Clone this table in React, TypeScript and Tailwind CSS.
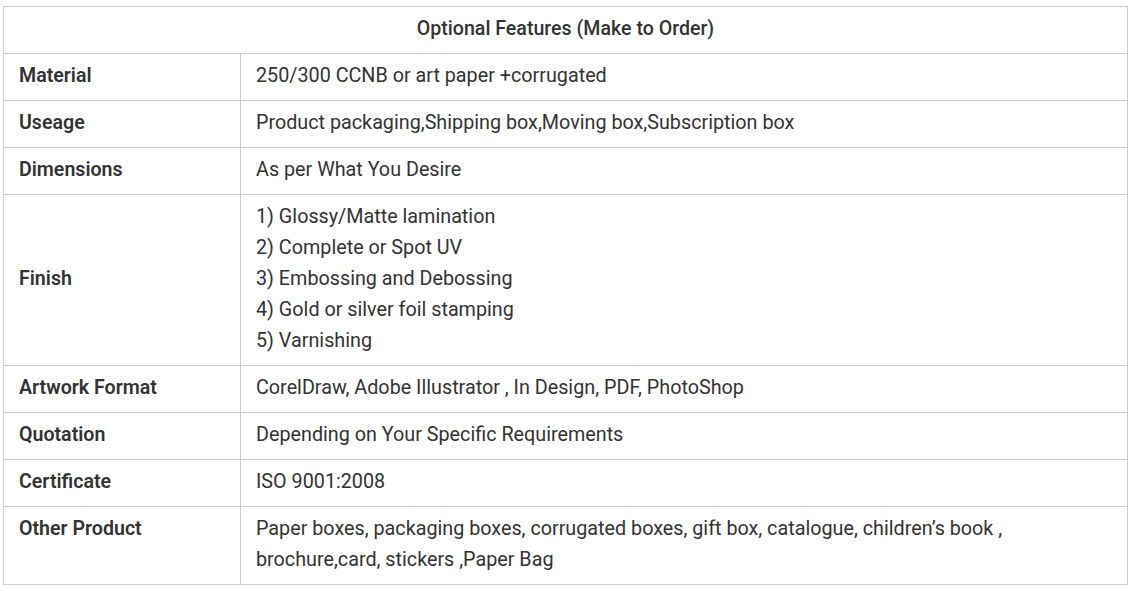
import React from "react";

const rows: { label: string; value: React.ReactNode; top?: boolean }[] = [
  { label: "Material", value: "250/300 CCNB or art paper +corrugated" },
  { label: "Useage", value: "Product packaging,Shipping box,Moving box,Subscription box" },
  { label: "Dimensions", value: "As per What You Desire" },
  {
    label: "Finish",
    value: (
      <>
        1) Glossy/Matte lamination
        <br />
        2) Complete or Spot UV
        <br />
        3) Embossing and Debossing
        <br />
        4) Gold or silver foil stamping
        <br />
        5) Varnishing
      </>
    ),
  },
  { label: "Artwork Format", value: "CorelDraw, Adobe Illustrator , In Design, PDF, PhotoShop" },
  { label: "Quotation", value: "Depending on Your Specific Requirements" },
  { label: "Certificate", value: "ISO 9001:2008" },
  {
    label: "Other Product",
    top: true,
    value: (
      <>
        Paper boxes, packaging boxes, corrugated boxes, gift box, catalogue, children’s book ,
        <br />
        brochure,card, stickers ,Paper Bag
      </>
    ),
  },
];

export default function App() {
  return (
    <div className="bg-white w-[1132px] h-[589px] pl-[3px] pt-[6px]" style={{ fontFamily: "Roboto, 'Liberation Sans', sans-serif" }}>
      <table className="w-[1125px] border-collapse text-[19.6px] text-[#333333] leading-[31px]">
        <tbody>
          <tr>
            <td colSpan={2} className="border border-[#cccccc] pt-[6px] pb-[9px] px-4 text-center font-medium">
              Optional Features (Make to Order)
            </td>
          </tr>
          {rows.map((r) => (
            <tr key={r.label}>
              <td className={`border border-[#cccccc] pt-[6px] pb-[9px] pl-[15px] pr-4 w-[237px] font-semibold ${r.top ? "align-top" : "align-middle"}`}>{r.label}</td>
              <td className="border border-[#cccccc] pt-[6px] pb-[9px] pl-[15px] pr-4 align-middle text-[19.75px]">{r.value}</td>
            </tr>
          ))}
        </tbody>
      </table>
    </div>
  );
}
